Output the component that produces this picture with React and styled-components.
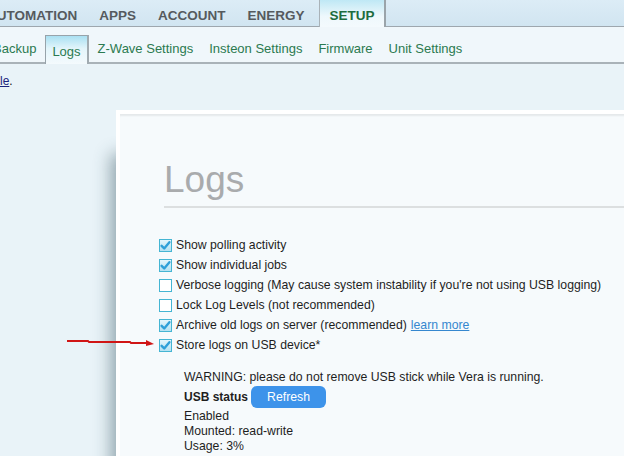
import React from "react";
import styled, { createGlobalStyle } from "styled-components";

const Global = createGlobalStyle`
  html, body { margin: 0; padding: 0; }
  body {
    background: #e9f3f8;
    font-family: "Liberation Sans", Arial, sans-serif;
    overflow: hidden;
    width: 624px;
    height: 456px;
  }
`;

const Page = styled.div`
  position: relative;
  width: 624px;
  height: 456px;
  overflow: hidden;
`;

const TopBar = styled.nav`
  display: flex;
  align-items: stretch;
  height: 26px;
  background: linear-gradient(#dcecf6, #d1e5f1);
  border-bottom: 1px solid #9ea7ae;
  margin-left: -24px;
  white-space: nowrap;
`;

const TopItem = styled.div`
  padding: 5px 11px 0;
  line-height: 21px;
  font-size: 13.5px;
  font-weight: bold;
  color: ${(p) => (p.$active ? "#1d6c3e" : "#555a5e")};
  ${(p) =>
    p.$active &&
    `
    margin-left: 3px;
    padding: 5px 9px 0 10px;
    margin-bottom: -1px;
    background: linear-gradient(#bfe8f5, #eef8fc 60%, #f4fafd);
    border-left: 1px solid #a9b2b8;
    border-right: 2px solid #9aa4aa;
  `}
`;

const SubBar = styled.nav`
  display: flex;
  align-items: flex-end;
  gap: 2px;
  height: 35px;
  background: #f0f7fb;
  border-bottom: 2px solid #a9b2b8;
  margin-left: -14px;
  white-space: nowrap;
`;

const SubItem = styled.div`
  height: 27px;
  line-height: 27px;
  padding: 0 6px;
  border: 1px solid transparent;
  border-bottom: none;
  font-size: 13px;
  color: #2b7a50;
  ${(p) =>
    p.$active &&
    `
    height: 28px;
    line-height: 31px;
    margin-bottom: -2px;
    background: linear-gradient(#a9e0f2, #e3f5fb 45%, #f4fafd);
    border-color: #97a3aa;
    border-right: 2px solid #a1abb1;
  `}
`;

const Main = styled.main`
  padding-top: 10px;
`;

const Intro = styled.p`
  margin: 0;
  font-size: 12px;
  line-height: 15px;
  color: #111;
`;

const IntroLink = styled.a`
  color: #1a237e;
  text-decoration: underline;
`;

const Panel = styled.section`
  margin: 21px 0 0 116px;
  width: 560px;
  min-height: 420px;
  border: 4px solid #ffffff;
  background: #f6fafc;
  box-shadow: -5px 44px 16px rgba(40, 70, 82, 0.45),
    inset 0 3px 2px -1px rgba(0, 0, 0, 0.07);
  padding: 45px 0 0 39px;
`;

const Heading = styled.h1`
  margin: 0 0 0 5px;
  padding: 0 0 5px 0;
  font-size: 37px;
  line-height: 42px;
  font-weight: normal;
  color: #a9abad;
  border-bottom: 2px solid #dcdfe0;
`;

const OptionList = styled.div`
  display: flex;
  flex-direction: column;
  margin-top: 27px;
`;

const Row = styled.label`
  display: flex;
  align-items: center;
  gap: 4px;
  height: 20px;
  font-size: 12.25px;
  color: #1e1e1e;
  white-space: nowrap;
`;

const Learn = styled.a`
  color: #3587cf;
  text-decoration: underline;
  margin-left: 4px;
`;

const UsbBlock = styled.div`
  margin: 15px 0 0 25px;
  display: flex;
  flex-direction: column;
  font-size: 12.25px;
  line-height: 15px;
  color: #1e1e1e;
`;

const StatusRow = styled.div`
  display: flex;
  align-items: center;
  gap: 3px;
  height: 22px;
  margin: 1px 0 1px;
`;

const Bold = styled.span`
  font-weight: bold;
  font-size: 12px;
`;

const RefreshButton = styled.button`
  width: 75px;
  height: 22px;
  border: none;
  border-radius: 6px;
  background: #3d93ea;
  color: #ffffff;
  font-family: "Liberation Sans", Arial, sans-serif;
  font-size: 12.25px;
  padding: 0;
`;

const Arrow = styled.svg`
  position: absolute;
  left: 64px;
  top: 336px;
`;

const Box = styled.svg`
  flex: none;
  display: block;
`;

function Check({ checked }) {
  return (
    <Box width="13" height="13" viewBox="0 0 13 13">
      <defs>
        <linearGradient id="cbg" x1="0" y1="0" x2="0" y2="1">
          <stop offset="0" stopColor="#e6f6fc" />
          <stop offset="1" stopColor="#b2e0f1" />
        </linearGradient>
      </defs>
      <rect
        x="0.5"
        y="0.5"
        width="12"
        height="12"
        fill={checked ? "url(#cbg)" : "#ffffff"}
        stroke="#45b5d3"
      />
      {checked && (
        <path
          d="M2.6 6.8 L5.2 9.4 L10.4 3.2"
          fill="none"
          stroke="#2f9fd8"
          strokeWidth="2.4"
          strokeLinecap="round"
          strokeLinejoin="round"
        />
      )}
    </Box>
  );
}

const options = [
  { label: "Show polling activity", checked: true },
  { label: "Show individual jobs", checked: true },
  {
    label:
      "Verbose logging (May cause system instability if you're not using USB logging)",
    checked: false,
  },
  { label: "Lock Log Levels (not recommended)", checked: false },
  { label: "Archive old logs on server (recommended)", checked: true, learn: true },
  { label: "Store logs on USB device*", checked: true },
];

export default function App() {
  return (
    <Page>
      <Global />
      <TopBar>
        <TopItem>AUTOMATION</TopItem>
        <TopItem>APPS</TopItem>
        <TopItem>ACCOUNT</TopItem>
        <TopItem>ENERGY</TopItem>
        <TopItem $active>SETUP</TopItem>
      </TopBar>
      <SubBar>
        <SubItem>Backup</SubItem>
        <SubItem $active>Logs</SubItem>
        <SubItem>Z-Wave Settings</SubItem>
        <SubItem>Insteon Settings</SubItem>
        <SubItem>Firmware</SubItem>
        <SubItem>Unit Settings</SubItem>
      </SubBar>
      <Main>
        <Intro>
          <IntroLink href="#">le</IntroLink>.
        </Intro>
        <Panel>
          <Heading>Logs</Heading>
          <OptionList>
            {options.map((o) => (
              <Row key={o.label}>
                <Check checked={o.checked} />
                <span>
                  {o.label}
                  {o.learn && <Learn href="#">learn more</Learn>}
                </span>
              </Row>
            ))}
          </OptionList>
          <UsbBlock>
            <span>WARNING: please do not remove USB stick while Vera is running.</span>
            <StatusRow>
              <Bold>USB status</Bold>
              <RefreshButton>Refresh</RefreshButton>
            </StatusRow>
            <span>Enabled</span>
            <span>Mounted: read-write</span>
            <span>Usage: 3%</span>
          </UsbBlock>
        </Panel>
      </Main>
      <Arrow width="92" height="14" viewBox="0 0 92 14">
        <path
          d="M3 5 L24 5 L25 6 L66 6 L67 7 L84 7"
          fill="none"
          stroke="#d01515"
          strokeWidth="1.8"
        />
        <path d="M82 4 L90 8 L82 10 Z" fill="#d01515" />
      </Arrow>
    </Page>
  );
}
